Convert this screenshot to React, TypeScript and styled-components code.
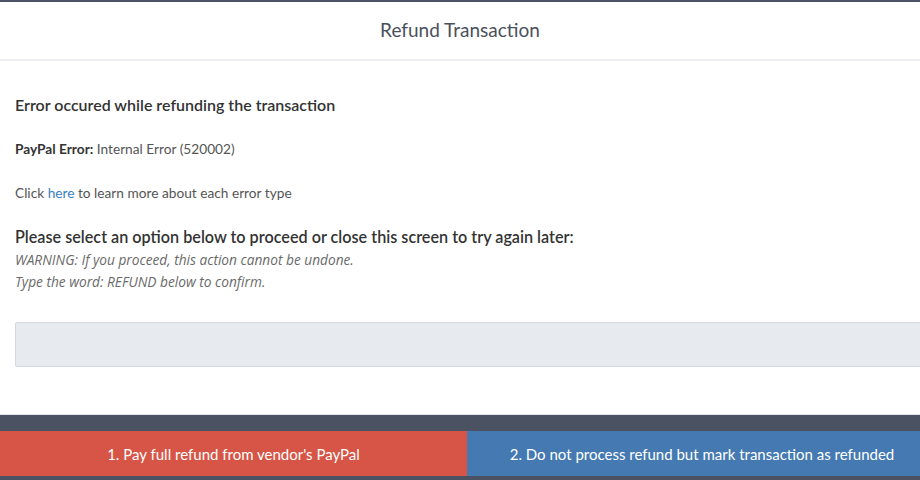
import React from "react";
import styled, { createGlobalStyle } from "styled-components";

const GlobalStyle = createGlobalStyle`
    html, body {
        margin: 0;
        padding: 0;
        background: #ffffff;
    }
    body {
        font-family: Lato, "Open Sans", Arial, sans-serif;
        color: #333840;
    }
`;

const Modal = styled.div`
    width: 920px;
    height: 480px;
    display: flex;
    flex-direction: column;
    border-top: 2px solid #4d5564;
    box-sizing: border-box;
    overflow: hidden;
`;

const Header = styled.div`
    height: 54px;
    padding-bottom: 3px;
    display: flex;
    align-items: center;
    justify-content: center;
    border-bottom: 2px solid #ebedf0;
    flex-shrink: 0;
`;

const Title = styled.h1`
    margin: 0;
    font-size: 19px;
    font-weight: 400;
    color: #4a505c;
`;

const Body = styled.div`
    flex: 1;
    padding: 34px 0 0 15px;
    border-bottom: 1px solid #e3e5e8;
`;

const Heading = styled.h2`
    margin: 0;
    font-size: 16px;
    font-weight: 600;
    color: #333;
    line-height: 20px;
`;

const Line = styled.p<{ $top: number }>`
    margin: ${(p) => p.$top}px 0 0;
    font-size: 13.7px;
    line-height: 18px;
    color: #555;
`;

const Strong = styled.strong`
    font-weight: 700;
    color: #333;
`;

const Link = styled.a`
    color: #3a7fc1;
    text-decoration: none;
`;

const Prompt = styled.h3`
    margin: 25px 0 0;
    font-size: 16.2px;
    font-weight: 600;
    line-height: 20px;
    color: #333;
`;

const Notes = styled.div`
    margin-top: 2px;
`;

const Note = styled.p`
    margin: 0;
    font-family: "Open Sans", Lato, Arial, sans-serif;
    font-size: 13.7px;
    font-style: italic;
    line-height: 22px;
    color: #6a6a6a;
`;

const ConfirmInput = styled.input`
    display: block;
    margin-top: 29px;
    width: 920px;
    height: 45px;
    box-sizing: border-box;
    background: #e7eaef;
    border: 1px solid #d3d9e1;
    border-radius: 2px;
    outline: none;
`;

const Footer = styled.div`
    height: 65px;
    background: #4b5363;
    display: flex;
    padding: 16px 0 4px;
    box-sizing: border-box;
    flex-shrink: 0;
    overflow: hidden;
`;

const ActionButton = styled.button<{ $color: string; $width: string }>`
    width: ${(p) => p.$width};
    flex-shrink: 0;
    border: none;
    margin: 0;
    padding: 0;
    background: ${(p) => p.$color};
    color: #fff;
    font-family: Lato, "Open Sans", Arial, sans-serif;
    font-size: 15px;
    cursor: pointer;
`;

export default function App() {
    return (
        <>
            <GlobalStyle />
            <Modal>
                <Header>
                    <Title>Refund Transaction</Title>
                </Header>
                <Body>
                    <Heading>Error occured while refunding the transaction</Heading>
                    <Line $top={25}>
                        <Strong>PayPal Error:</Strong> Internal Error (520002)
                    </Line>
                    <Line $top={26}>
                        Click <Link href="#">here</Link> to learn more about each error type
                    </Line>
                    <Prompt>Please select an option below to proceed or close this screen to try again later:</Prompt>
                    <Notes>
                        <Note>WARNING: If you proceed, this action cannot be undone.</Note>
                        <Note>Type the word: REFUND below to confirm.</Note>
                    </Notes>
                    <ConfirmInput type="text" />
                </Body>
                <Footer>
                    <ActionButton $color="#d65546" $width="467px">
                        1. Pay full refund from vendor's PayPal
                    </ActionButton>
                    <ActionButton $color="#4479b2" $width="470px">
                        2. Do not process refund but mark transaction as refunded
                    </ActionButton>
                </Footer>
            </Modal>
        </>
    );
}
